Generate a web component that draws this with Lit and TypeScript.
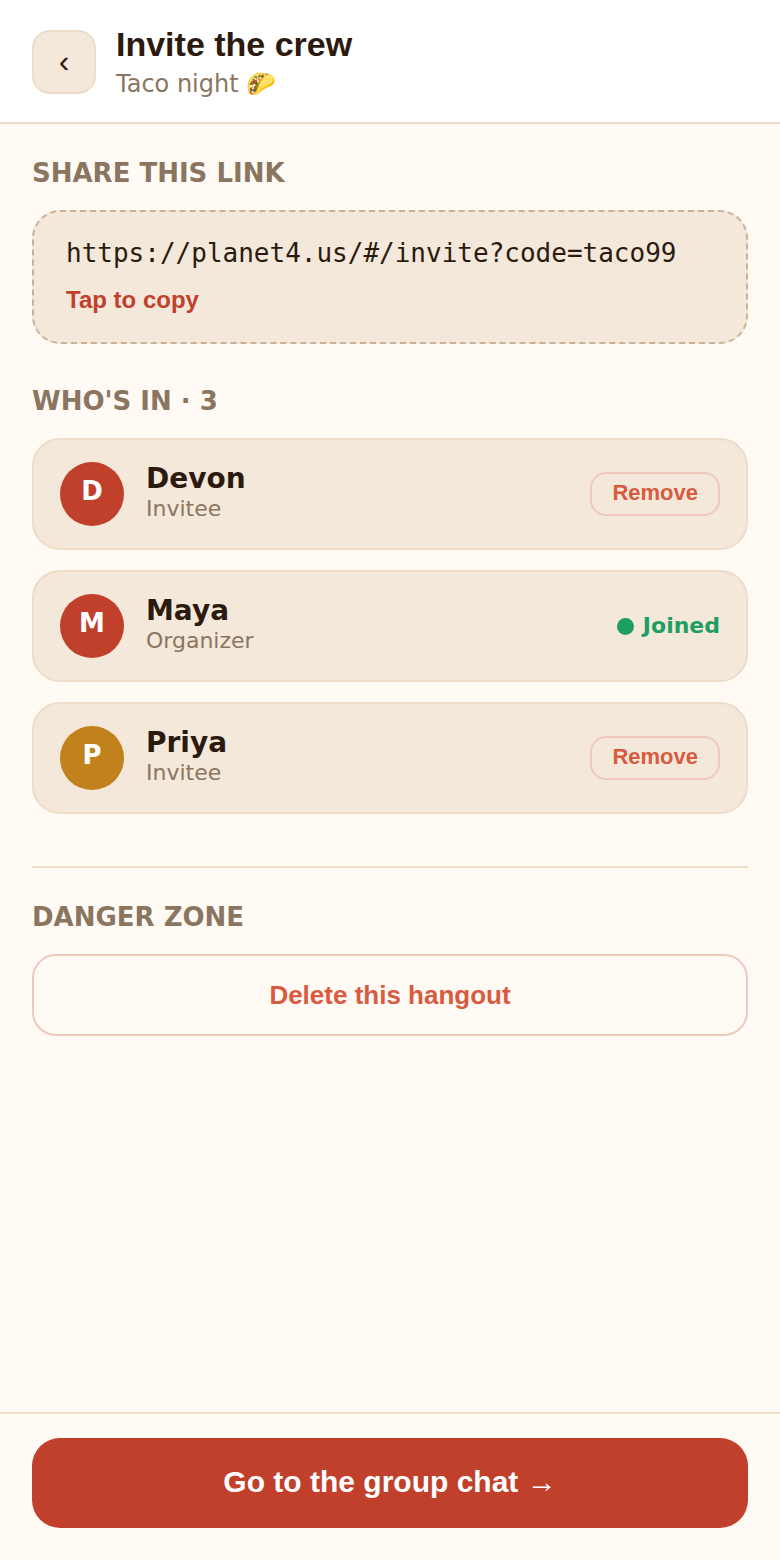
import { LitElement, html, css } from 'lit'
import { customElement } from 'lit/decorators.js'
import { map } from 'lit/directives/map.js'

interface Member {
  name: string
  role: string
  color: string
  joined: boolean
}

const MEMBERS: Member[] = [
  { name: 'Devon', role: 'Invitee', color: '#c0402c', joined: false },
  { name: 'Maya', role: 'Organizer', color: '#c0402c', joined: true },
  { name: 'Priya', role: 'Invitee', color: '#c1821e', joined: false },
]

@customElement('app-root')
export default class AppRoot extends LitElement {
  static styles = css`
    :host {
      display: flex;
      flex-direction: column;
      min-height: 1560px;
      background: #fffaf4;
      color: #2c1a0e;
      font-family: 'DejaVu Sans', sans-serif;
    }

    button {
      font-family: 'Liberation Sans', sans-serif;
      font-weight: 700;
      cursor: pointer;
    }

    .top {
      display: flex;
      align-items: center;
      gap: 20px;
      height: 64px;
      padding: 30px 32px 28px;
      background: #fff;
      border-bottom: 2px solid #ecdcc8;
    }

    .back {
      width: 64px;
      height: 64px;
      padding: 0 0 3px;
      border: 2px solid #ecdcc8;
      border-radius: 18px;
      background: #f3e8da;
      color: #2c1a0e;
      font-size: 32px;
      font-weight: 400;
      line-height: 1;
    }

    .heading {
      padding-top: 2px;
    }

    .title {
      font-family: 'Liberation Sans', sans-serif;
      font-size: 34px;
      font-weight: 700;
      line-height: 40px;
    }

    .sub {
      margin-top: 2px;
      font-size: 24px;
      line-height: 36px;
      color: #8a7560;
    }

    main {
      flex: 1;
      padding: 32px 32px 0;
    }

    .label {
      font-size: 26px;
      font-weight: 700;
      line-height: 34px;
      color: #8a7560;
      margin-bottom: 20px;
    }

    .link {
      height: 134px;
      box-sizing: border-box;
      padding: 23px 32px;
      margin-bottom: 40px;
      border: 2px dashed #c9b29a;
      border-radius: 28px;
      background: #f3e8da;
    }

    .url {
      font-family: 'DejaVu Sans Mono', monospace;
      font-size: 26px;
      line-height: 36px;
    }

    .copy {
      margin-top: 15px;
      font-family: 'Liberation Sans', sans-serif;
      font-size: 24px;
      font-weight: 700;
      line-height: 28px;
      color: #c0402c;
    }

    .list {
      display: flex;
      flex-direction: column;
      gap: 20px;
    }

    .member {
      display: flex;
      align-items: center;
      gap: 22px;
      height: 112px;
      box-sizing: border-box;
      padding: 0 26px;
      border: 2px solid #ecdcc8;
      border-radius: 28px;
      background: #f3e8da;
    }

    .avatar {
      flex: none;
      display: flex;
      align-items: center;
      justify-content: center;
      width: 64px;
      height: 64px;
      border-radius: 50%;
      color: #fff;
      font-size: 26px;
      font-weight: 700;
      padding-bottom: 6px;
      box-sizing: border-box;
    }

    .who {
      flex: 1;
      padding-bottom: 2px;
    }

    .name {
      font-size: 28px;
      font-weight: 700;
      line-height: 32px;
    }

    .role {
      font-size: 22px;
      line-height: 28px;
      color: #8a7560;
    }

    .remove {
      height: 44px;
      padding: 0 20px 2px;
      border: 2px solid #eec9bc;
      border-radius: 16px;
      background: transparent;
      color: #d85a40;
      font-size: 22px;
    }

    .joined {
      display: flex;
      align-items: center;
      gap: 9px;
      font-size: 22px;
      font-weight: 700;
      color: #1f9d63;
    }

    .joined-text {
      margin-bottom: 2px;
    }

    .dot {
      width: 17px;
      height: 17px;
      border-radius: 50%;
      background: #1f9d63;
    }

    .rule {
      height: 2px;
      margin: 52px 0 32px;
      background: #ecdcc8;
    }

    .delete {
      display: block;
      width: 100%;
      height: 82px;
      border: 2px solid #eec9bc;
      border-radius: 24px;
      background: transparent;
      color: #d85a40;
      font-size: 26px;
    }

    .foot {
      padding: 24px 32px 32px;
      border-top: 2px solid #ecdcc8;
    }

    .go {
      display: block;
      width: 100%;
      height: 90px;
      padding-bottom: 3px;
      border: 0;
      border-radius: 28px;
      background: #c0402c;
      color: #fff;
      font-size: 30px;
    }
  `

  render() {
    return html`
      <header class="top">
        <button class="back">‹</button>
        <div class="heading">
          <div class="title">Invite the crew</div>
          <div class="sub">Taco night 🌮</div>
        </div>
      </header>
      <main>
        <div class="label">SHARE THIS LINK</div>
        <div class="link">
          <div class="url">https://planet4.us/#/invite?code=taco99</div>
          <div class="copy">Tap to copy</div>
        </div>
        <div class="label">WHO'S IN · 3</div>
        <div class="list">
          ${map(MEMBERS, (m) => html`
            <div class="member">
              <div class="avatar" style="background:${m.color}">${m.name[0]}</div>
              <div class="who">
                <div class="name">${m.name}</div>
                <div class="role">${m.role}</div>
              </div>
              ${m.joined
                ? html`<div class="joined"><span class="dot"></span><span class="joined-text">Joined</span></div>`
                : html`<button class="remove">Remove</button>`}
            </div>
          `)}
        </div>
        <div class="rule"></div>
        <div class="label">DANGER ZONE</div>
        <button class="delete">Delete this hangout</button>
      </main>
      <footer class="foot">
        <button class="go">Go to the group chat →</button>
      </footer>
    `
  }
}
